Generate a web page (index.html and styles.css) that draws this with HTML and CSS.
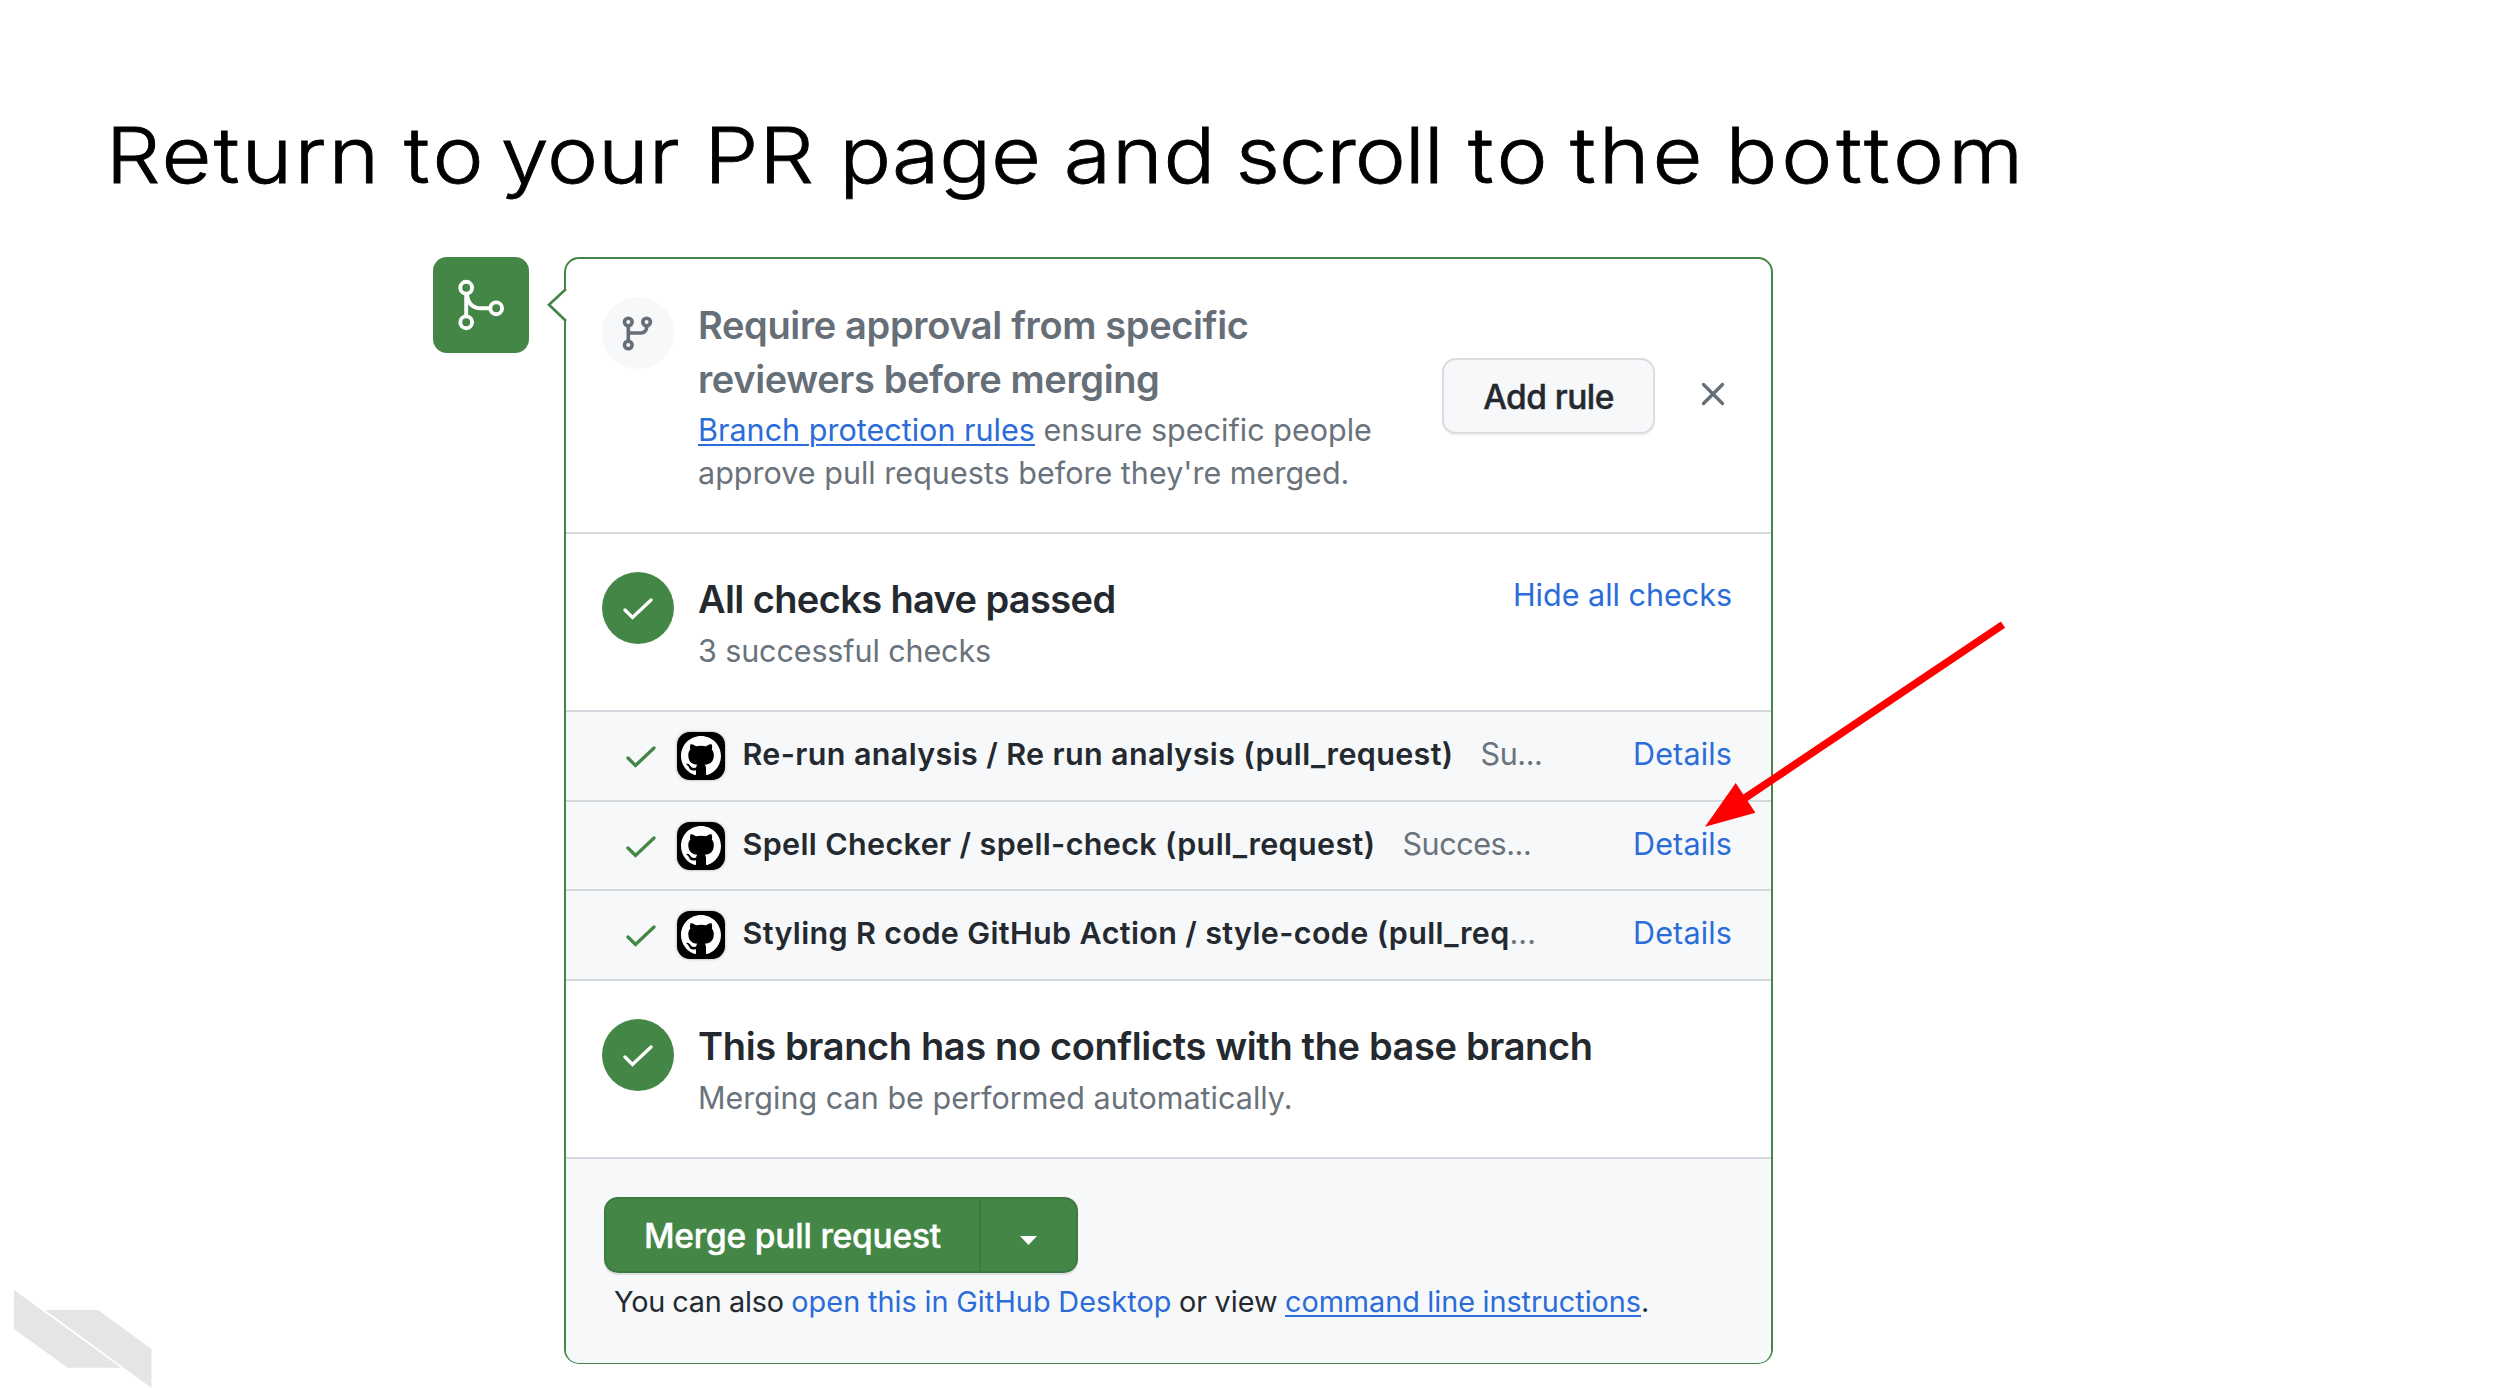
FILE: index.html
```html
<!DOCTYPE html>
<html lang="en">
<head>
<meta charset="utf-8">
<title>Return to your PR page</title>
<link rel="stylesheet" href="styles.css">
</head>
<body>
<svg class="defs" width="0" height="0" aria-hidden="true">
  <symbol id="mark" viewBox="0 0 16 16"><path d="M8 0C3.58 0 0 3.58 0 8c0 3.54 2.29 6.53 5.47 7.59.4.07.55-.17.55-.38 0-.19-.01-.82-.01-1.49-2.01.37-2.53-.49-2.69-.94-.09-.23-.48-.94-.82-1.13-.28-.15-.68-.52-.01-.53.63-.01 1.08.58 1.23.82.72 1.21 1.87.87 2.33.66.07-.52.28-.87.51-1.07-1.78-.2-3.64-.89-3.64-3.95 0-.87.31-1.59.82-2.15-.08-.2-.36-1.02.08-2.12 0 0 .67-.21 2.2.82.64-.18 1.32-.27 2-.27s1.36.09 2 .27c1.53-1.04 2.2-.82 2.2-.82.44 1.1.16 1.92.08 2.12.51.56.82 1.27.82 2.15 0 3.07-1.87 3.75-3.65 3.95.29.25.54.73.54 1.48 0 1.07-.01 1.93-.01 2.2 0 .21.15.46.55.38A8.01 8.01 0 0 0 16 8c0-4.42-3.58-8-8-8z"/></symbol>
  <symbol id="check" viewBox="0 0 30 22"><path d="M2 12l7.5 7.5L28 2" fill="none" stroke="currentColor" stroke-width="3.3" stroke-linecap="round"/></symbol>
</svg>
<main class="slide">
  <h1 class="title">
    <span class="w1">Return</span> <span class="w2">to</span> <span class="w3">your</span> <span class="w4">PR</span> <span class="w5">page</span> <span class="w6">and</span> <span class="w7">scroll</span> <span class="w8">to</span> <span class="w9">the</span> <span class="w10">bottom</span>
  </h1>

  <div class="merge">
    <div class="badge">
      <svg width="96" height="96" viewBox="0 0 96 96" fill="none" stroke="#fff" stroke-width="3.9">
        <circle cx="33.2" cy="30.7" r="5.9"/><circle cx="33.2" cy="65.3" r="5.9"/><circle cx="63.2" cy="51.3" r="5.9"/>
        <path d="M33.2 36.600v22.800M34 37.500c1 9 6 13.800 14 13.800h9.300"/>
      </svg>
    </div>
    <section class="panel">
      <svg class="caret" width="22" height="36" viewBox="0 0 22 36"><path d="M21 2L4 17.700L21 34" fill="#fff" stroke="#448646" stroke-width="2.700"/></svg>

      <div class="section approval">
        <div class="circle muted">
          <svg width="72" height="72" viewBox="0 0 72 72" fill="none" stroke="#666e77" stroke-width="3.6">
            <circle cx="26.300" cy="25" r="3.800"/><circle cx="44.600" cy="25" r="3.800"/><circle cx="26.300" cy="48" r="3.800"/>
            <path d="M26.300 29v15M44.600 29v1.500a5.500 5.500 0 0 1-5.500 5.500H26.300"/>
          </svg>
        </div>
        <div class="copy">
          <h2>Require approval from specific<br><span class="h-line">reviewers before merging</span></h2>
          <p class="sub"><a class="underlined" href="#">Branch protection rules</a> ensure specific people<br>approve pull requests before they're merged.</p>
        </div>
        <div class="actions">
          <button class="btn">Add rule</button>
          <svg class="close" width="24" height="24" viewBox="0 0 24 24" fill="none" stroke="#666e77" stroke-width="3.3" stroke-linecap="round"><path d="M2.500 2.500l19 19M21.500 2.500l-19 19"/></svg>
        </div>
      </div>

      <div class="section">
        <div class="circle"><svg class="tick" width="30" height="22"><use href="#check"/></svg></div>
        <div class="copy">
          <h2 class="passed">All checks have passed</h2>
          <p class="sub count">3 successful checks</p>
        </div>
        <a class="side hide" href="#">Hide all checks</a>
      </div>

      <div class="row">
        <svg class="tick" width="30" height="22"><use href="#check"/></svg>
        <span class="avatar"><svg width="40" height="40"><use href="#mark"/></svg></span>
        <p class="job"><strong>Re-run analysis / Re run analysis (pull_request)</strong><span class="state">Su...</span></p>
        <a class="side" href="#">Details</a>
      </div>
      <div class="row">
        <svg class="tick" width="30" height="22"><use href="#check"/></svg>
        <span class="avatar"><svg width="40" height="40"><use href="#mark"/></svg></span>
        <p class="job"><strong>Spell Checker / spell-check (pull_request)</strong><span class="state">Succes...</span></p>
        <a class="side" href="#">Details</a>
      </div>
      <div class="row">
        <svg class="tick" width="30" height="22"><use href="#check"/></svg>
        <span class="avatar"><svg width="40" height="40"><use href="#mark"/></svg></span>
        <p class="job"><strong>Styling R code GitHub Action / style-code (pull_req</strong><span class="dots">...</span></p>
        <a class="side" href="#">Details</a>
      </div>

      <div class="section conflicts">
        <div class="circle"><svg class="tick" width="30" height="22"><use href="#check"/></svg></div>
        <div class="copy">
          <h2>This branch has no conflicts with the base branch</h2>
          <p class="sub">Merging can be performed automatically.</p>
        </div>
      </div>

      <div class="footer">
        <div class="split">
          <button class="go">Merge pull request</button>
          <button class="more" aria-label="More options"><svg width="17" height="9" viewBox="0 0 17 9"><path d="M0 0h17L8.500 9z" fill="#fff"/></svg></button>
        </div>
        <p class="also"><span class="lead">You can also</span> <a class="desktop" href="#">open this in GitHub Desktop</a> or view <a class="underlined" href="#">command line instructions</a>.</p>
      </div>
    </section>
  </div>

  <svg class="arrow" width="310" height="216" viewBox="0 0 310 216">
    <path d="M303 9.600L45 183" stroke="#f00" stroke-width="7.600"/>
    <path d="M5 211.700L35.700 168L55.400 197.700z" fill="#f00"/>
  </svg>
  <svg class="logo" width="138" height="98" viewBox="0 0 138 98" fill="#e5e5e5">
    <path d="M0 0L107 77.700H53.700L0 39z"/><path d="M31 20h53l53.500 39v39z"/>
  </svg>
</main>
</body>
</html>
```
FILE: styles.css
```css
* { box-sizing: border-box; }
body { margin: 0; background: #fff; font-family: Inter, "Liberation Sans", sans-serif; color: #24292f; }
h1, h2, p { margin: 0; }
a { color: #2b6cd9; text-decoration: none; }
button { font-family: inherit; padding: 0; margin: 0; }
svg { display: block; flex: none; }
.defs { position: absolute; }

.slide { position: relative; width: 2500px; height: 1388px; overflow: hidden; padding-top: 109px; }

.title {
  display: flex; width: 2100px; height: 92px; padding-left: 94.5px;
  font-size: 77px; line-height: 92px; font-weight: 300; color: #000;
  -webkit-text-stroke: .8px #000;
  transform: scaleX(1.12); transform-origin: 0 0; white-space: nowrap;
}
.title span { flex: none; }
.w1 { width: 266.3px; letter-spacing: 1.9px; }
.w2 { width: 86.4px; letter-spacing: 3.1px; }
.w3 { width: 181.6px; letter-spacing: -.1px; }
.w4 { width: 120.6px; letter-spacing: .8px; }
.w5 { width: 200.3px; letter-spacing: -.1px; }
.w6 { width: 153.5px; letter-spacing: .8px; }
.w7 { width: 207.6px; letter-spacing: -.95px; }
.w8 { width: 91.1px; letter-spacing: 3.1px; }
.w9 { width: 138.7px; letter-spacing: 2.6px; }
.w10 { letter-spacing: 3.5px; }

.merge { display: flex; align-items: flex-start; gap: 35.5px; margin-top: 56px; padding-left: 432.5px; }
.badge { width: 96px; height: 96px; border-radius: 14px; background: #448646; }
.panel { position: relative; width: 1209px; height: 1107px; border: 2px solid #448646; border-radius: 15px; background: #fff; }
.caret { position: absolute; left: -21px; top: 28px; }

.section { display: flex; align-items: flex-start; height: 178px; padding: 37.500px 39px 0 36px; border-bottom: 2px solid #d3d8df; }
.approval { height: 275px; }
.conflicts { height: 178.200px; padding-top: 38px; }
.circle { display: flex; align-items: center; justify-content: center; flex: none; width: 72px; height: 72px; margin-right: 24px; border-radius: 50%; background: #448646; color: #fff; }
.circle .tick { margin-top: 3px; }
.muted { background: #f6f8fa; }
.copy { flex: 1; white-space: nowrap; }
h2 { font-size: 38px; line-height: 54px; font-weight: 600; letter-spacing: -.36px; }
.passed { letter-spacing: -.62px; }
.approval h2 { color: #666e77; margin-top: 1px; }
.approval .h-line { letter-spacing: -.38px; }
.sub { margin-top: 3px; font-size: 30.5px; line-height: 43.2px; letter-spacing: .02px; color: #6a727b; }
.approval .sub { margin-top: 2px; }
.count { letter-spacing: -.115px; }
.underlined { text-decoration: underline; text-decoration-thickness: 2px; text-underline-offset: 3px; }
.side { font-size: 30.5px; line-height: 44px; white-space: nowrap; }
.hide { margin-top: 1px; }

.actions { display: flex; align-items: center; gap: 46px; margin: 61px 7px 0 0; }
.btn { width: 213px; height: 76px; border: 2px solid #d9dce0; border-radius: 14px; background: #f6f8fa; box-shadow: 0 2px 1px rgba(27, 31, 36, .05); font-size: 33.5px; line-height: 68px; padding-top: 2px; font-weight: 500; letter-spacing: -.55px; color: #24292f; -webkit-text-stroke: .4px; }
.close { margin-top: -3px; }

.row { display: flex; align-items: flex-start; height: 89.600px; padding: 20px 39px 0 59.5px; border-bottom: 2px solid #d3d8df; background: #f6f8fa; }
.row .tick { margin: 14px 21px 0 0; color: #448646; }
.avatar { display: flex; align-items: center; justify-content: center; flex: none; width: 48px; height: 48px; margin-right: 18px; border-radius: 13px; background: #000; box-shadow: 0 0 3px rgba(0, 0, 0, .35); }
.avatar svg { fill: #fff; }
.job { flex: 1; font-size: 30.5px; line-height: 44px; white-space: nowrap; }
.job strong { font-weight: 600; letter-spacing: .36px; }
.state { margin-left: 27px; letter-spacing: -.42px; color: #6a727b; }
.dots { color: #6a727b; }
.row .side { letter-spacing: .15px; }

.footer { height: 204px; padding: 38px 0 0 38px; background: #f6f8fa; border-radius: 0 0 13px 13px; }
.split { display: flex; width: 474px; height: 76px; border-radius: 14px; box-shadow: 0 2px 1px rgba(27, 31, 36, .12); }
.split button { border: 2px solid #3d7a41; background: #448646; color: #fff; }
.split .go { width: 377px; border-radius: 14px 0 0 14px; font-size: 33.5px; font-weight: 500; letter-spacing: -.19px; padding-top: 3px; -webkit-text-stroke: .4px; }
.split .more { display: flex; align-items: center; justify-content: center; width: 97px; border-left: 0; border-radius: 0 14px 14px 0; padding-top: 11px; }
.also { margin-top: 9px; padding-left: 10px; font-size: 28.800px; line-height: 40px; letter-spacing: -.02px; white-space: nowrap; word-spacing: -.6px; }
.lead { letter-spacing: -.2px; }
.desktop { letter-spacing: .09px; }

.arrow { position: absolute; left: 1700px; top: 615px; }
.logo { position: absolute; left: 14px; top: 1290px; }
```
